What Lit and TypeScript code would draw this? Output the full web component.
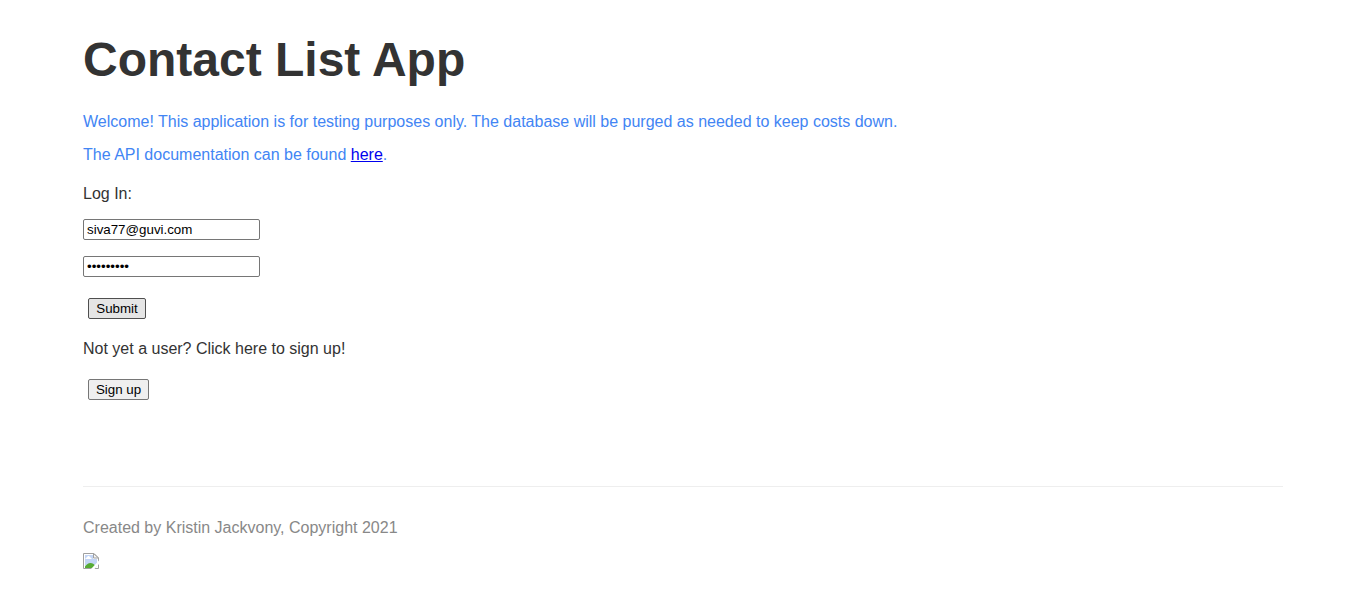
import { LitElement, html, css } from "lit";
import { customElement } from "lit/decorators.js";

@customElement("app-root")
export class AppRoot extends LitElement {
  static styles = css`
    :host {
      display: block;
      height: 589px;
      overflow: hidden;
      background: #fff;
      color: #333;
      font: 16px/18px "Liberation Sans", Arial, sans-serif;
    }
    .main {
      width: 1200px;
      margin: 0 auto;
      padding-top: 32px;
    }
    h1 {
      margin: 0;
      font-size: 48px;
      line-height: 55px;
    }
    p {
      margin: 0;
    }
    .welcome {
      margin-top: 26px;
      color: #4285f4;
    }
    .docs {
      margin-top: 15px;
      color: #4285f4;
    }
    .docs a {
      color: #0000ee;
    }
    .login {
      margin-top: 21px;
    }
    input {
      display: block;
      box-sizing: border-box;
      width: 177px;
      height: 21px;
      margin: 16px 0 0;
      padding: 1px 2px 1px 3px;
      border: 1px solid #767676;
      border-radius: 2px;
      background: #fff;
      color: #000;
      font: 13.333px "Liberation Sans", Arial, sans-serif;
    }
    button {
      display: block;
      box-sizing: border-box;
      height: 21px;
      margin: 21px 0 0 5px;
      padding: 0;
      border: 1px solid #767676;
      border-radius: 2px;
      background: #efefef;
      color: #000;
      font: 13.333px/15px "Liberation Sans", Arial, sans-serif;
    }
    .submit {
      width: 58px;
      border-color: #4f4f4f;
      background: #e5e5e5;
    }
    .signup {
      width: 61px;
    }
    .prompt {
      margin-top: 21px;
    }
    footer {
      margin-top: 86px;
      border-top: 1px solid #eee;
      padding-top: 32px;
      color: #888;
    }
    .missing {
      display: block;
      width: 16px;
      height: 16px;
      margin-top: 16px;
    }
  `;

  render() {
    return html`
      <div class="main">
        <h1>Contact List App</h1>
        <p class="welcome">
          Welcome! This application is for testing purposes only. The database
          will be purged as needed to keep costs down.
        </p>
        <p class="docs">
          The API documentation can be found <a href="#">here</a>.
        </p>
        <p class="login">Log In:</p>
        <input type="text" .value=${"siva77@guvi.com"} />
        <input type="password" .value=${"password1"} />
        <button class="submit">Submit</button>
        <p class="prompt">Not yet a user? Click here to sign up!</p>
        <button class="signup">Sign up</button>
        <footer>
          <p>Created by Kristin Jackvony, Copyright 2021</p>
          <svg class="missing" viewBox="0 0 16 16">
            <path d="M.5 .5H11L15.500 5v10.500H.5z" fill="#fff" stroke="#a0a0a0" />
            <path d="M2 2h8v4h4v8H2z" fill="#c3d5f5" />
            <path d="M2.500 6V5h1V4h1V3h2v1h1v1h1v1z" fill="#fff" />
            <path d="M2 15v-1.500c2-2 3-3.500 5.500-3.500 2 0 3.500 1 5 3V15z" fill="#57ab35" />
            <path d="M8 16L16 7.500V11L11.500 16z" fill="#fff" />
            <path d="M10.500 .5V5h5z" fill="#f4f4f4" stroke="#a0a0a0" />
          </svg>
        </footer>
      </div>
    `;
  }
}
